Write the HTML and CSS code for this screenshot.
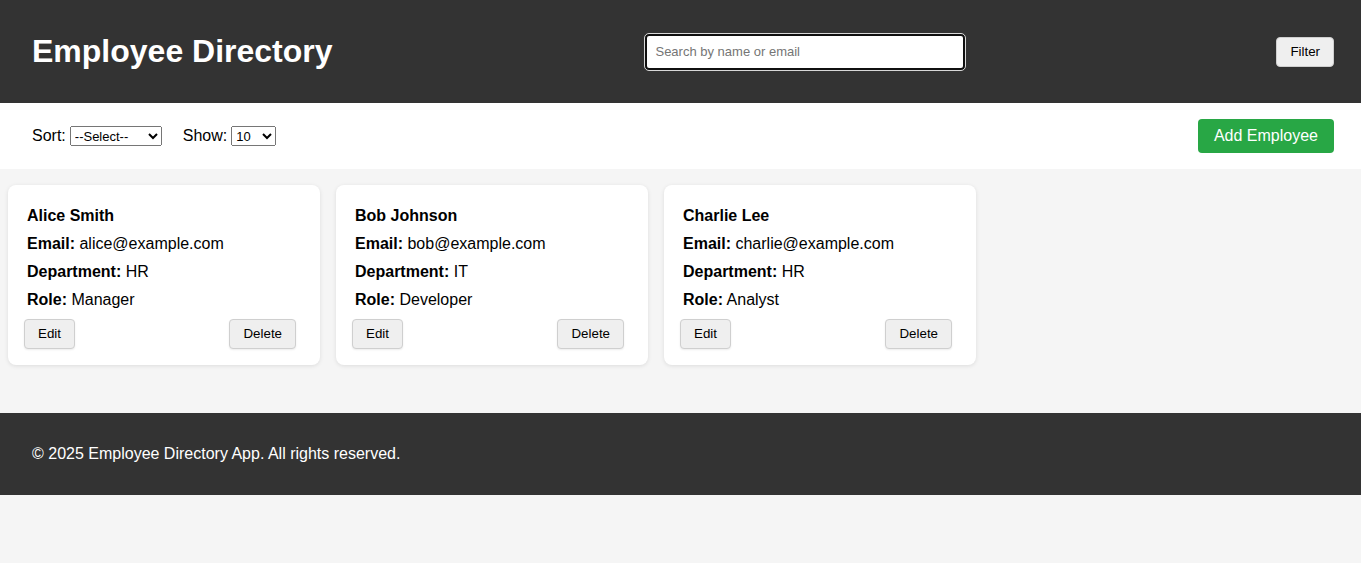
FILE: index.html
```html
<!DOCTYPE html>
<html lang="en">
<head>
<meta charset="utf-8">
<title>Employee Directory</title>
<link rel="stylesheet" href="styles.css">
</head>
<body>
<header class="site-header">
  <h1 class="title">Employee Directory</h1>
  <input class="search" type="text" placeholder="Search by name or email">
  <button class="btn">Filter</button>
</header>
<section class="toolbar">
  <div class="controls">
    <label class="control">Sort: <select class="select select-sort"><option>--Select--</option><option>First Name</option><option>Department</option></select></label>
    <label class="control">Show: <select class="select select-show"><option>10</option><option>25</option><option>50</option><option>100</option></select></label>
  </div>
  <button class="btn-primary">Add Employee</button>
</section>
<main class="content">
  <div class="card">
    <div class="info">
      <div class="name">Alice Smith</div>
      <div class="line"><strong>Email:</strong> alice@example.com</div>
      <div class="line"><strong>Department:</strong> HR</div>
      <div class="line"><strong>Role:</strong> Manager</div>
    </div>
    <div class="actions"><button class="btn">Edit</button><button class="btn">Delete</button></div>
  </div>
  <div class="card">
    <div class="info">
      <div class="name">Bob Johnson</div>
      <div class="line"><strong>Email:</strong> bob@example.com</div>
      <div class="line"><strong>Department:</strong> IT</div>
      <div class="line"><strong>Role:</strong> Developer</div>
    </div>
    <div class="actions"><button class="btn">Edit</button><button class="btn">Delete</button></div>
  </div>
  <div class="card">
    <div class="info">
      <div class="name">Charlie Lee</div>
      <div class="line"><strong>Email:</strong> charlie@example.com</div>
      <div class="line"><strong>Department:</strong> HR</div>
      <div class="line"><strong>Role:</strong> Analyst</div>
    </div>
    <div class="actions"><button class="btn">Edit</button><button class="btn">Delete</button></div>
  </div>
</main>
<footer class="site-footer">© 2025 Employee Directory App. All rights reserved.</footer>
</body>
</html>
```
FILE: styles.css
```css
* { box-sizing: border-box; }
body {
  margin: 0;
  font-family: "Liberation Sans", Arial, sans-serif;
  background: #f5f5f5;
  color: #000;
}
.site-header {
  height: 103px;
  background: #333;
  color: #fff;
  display: flex;
  align-items: center;
  justify-content: space-between;
  padding: 0 27px 0 32px;
}
.title {
  margin: 0;
  font-size: 32px;
  font-weight: bold;
  line-height: 37px;
}
.search {
  width: 320px;
  height: 36px;
  padding: 0 8px;
  font-family: "Liberation Sans", Arial, sans-serif;
  font-size: 13px;
  color: #000;
  background: #fff;
  border: 2px solid #101010;
  border-radius: 4px;
  outline: 1px solid #d8d8d8;
  margin-left: 2px;
}
.search::placeholder { color: #757575; }
.btn {
  font-family: "Liberation Sans", Arial, sans-serif;
  font-size: 13.333px;
  line-height: 16px;
  padding: 6px 13px;
  background: #efefef;
  color: #000;
  border: 1px solid #cfcfcf;
  border-radius: 4px;
  box-shadow: 0 1px 2px rgba(0,0,0,0.08);
  cursor: pointer;
}
.toolbar {
  background: #fff;
  height: 66px;
  display: flex;
  align-items: center;
  justify-content: space-between;
  padding: 0 27px 0 32px;
}
.controls {
  display: flex;
  align-items: center;
  gap: 21px;
}
.control {
  font-size: 16px;
  display: flex;
  align-items: center;
  gap: 4px;
}
.select {
  font-family: "Liberation Sans", Arial, sans-serif;
  font-size: 13px;
  height: 20px;
}
.select-sort { width: 92px; }
.select-show { width: 45px; }
.btn-primary {
  font-family: "Liberation Sans", Arial, sans-serif;
  font-size: 16px;
  line-height: 18px;
  padding: 8px 16px;
  background: #28a745;
  color: #fff;
  border: none;
  border-radius: 4px;
  cursor: pointer;
}
.content {
  display: flex;
  flex-wrap: wrap;
  gap: 16px;
  padding: 16px 8px 48px;
}
.card {
  width: 312px;
  background: #fff;
  border-radius: 8px;
  padding: 17px 16px 16px;
  box-shadow: 0 1px 4px rgba(0,0,0,0.1);
}
.info {
  padding-left: 3px;
  font-size: 16px;
  line-height: 28px;
}
.name { font-weight: bold; }
.actions {
  margin-top: 5px;
  display: flex;
  justify-content: space-between;
  padding-right: 8px;
}
.site-footer {
  background: #333;
  color: #fff;
  font-size: 16px;
  line-height: 18px;
  padding: 32px;
}
```
